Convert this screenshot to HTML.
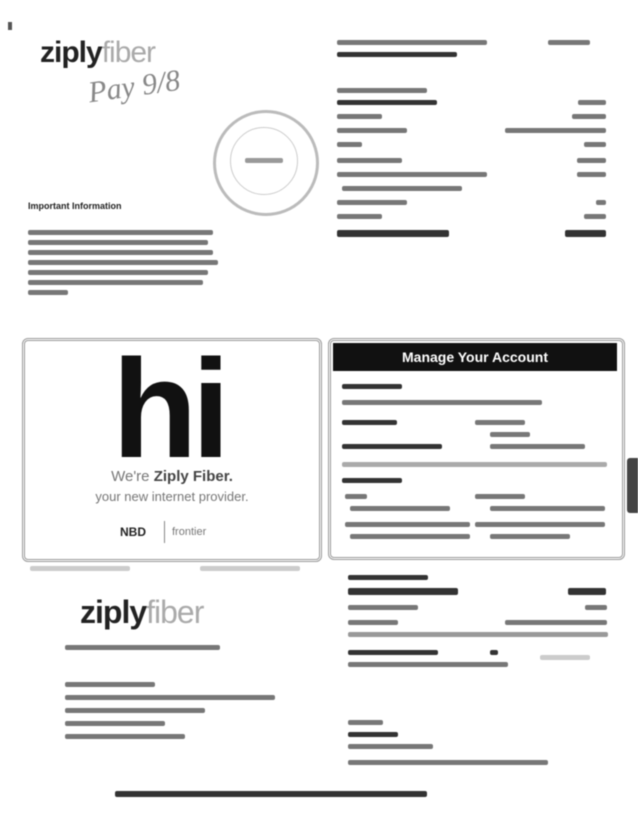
<!DOCTYPE html>
<html><head><meta charset="utf-8"><style>
body{margin:0;width:638px;height:825px;background:#fff;position:relative;overflow:hidden;font-family:"Liberation Sans",sans-serif;color:#222;filter:blur(0.6px)}
.a{position:absolute;white-space:nowrap}
.l{position:absolute;height:5px;background:#777;border-radius:2px}
.d{position:absolute;height:5px;background:#333;border-radius:2px}
</style></head><body>
<div class="a" style="left:8px;top:22px;width:4px;height:8px;background:#555"></div>
<div class="a" style="left:40px;top:36px;font-size:30px;font-weight:bold;letter-spacing:-1px">ziply<span style="font-weight:normal;color:#aaa">fiber</span></div>
<div class="a" style="left:88px;top:70px;font-size:30px;color:#888;font-family:'Liberation Serif',serif;font-style:italic;transform:rotate(-8deg)">Pay 9/8</div>
<div class="a" style="left:213px;top:110px;width:100px;height:100px;border:3px solid #bbb;border-radius:50%"></div>
<div class="a" style="left:230px;top:127px;width:66px;height:66px;border:1px solid #ccc;border-radius:50%"></div>
<div class="l" style="left:245px;top:158px;width:38px;background:#999"></div>
<div class="a" style="left:28px;top:201px;font-size:9px;font-weight:bold">Important Information</div>
<div class="l" style="left:28px;top:230px;width:185px"></div>
<div class="l" style="left:28px;top:240px;width:180px"></div>
<div class="l" style="left:28px;top:250px;width:185px"></div>
<div class="l" style="left:28px;top:260px;width:190px"></div>
<div class="l" style="left:28px;top:270px;width:180px"></div>
<div class="l" style="left:28px;top:280px;width:175px"></div>
<div class="l" style="left:28px;top:290px;width:40px"></div>
<div class="l" style="left:337px;top:40px;width:150px"></div>
<div class="l" style="left:548px;top:40px;width:42px"></div>
<div class="d" style="left:337px;top:52px;width:120px"></div>
<div class="l" style="left:337px;top:88px;width:90px"></div>
<div class="d" style="left:337px;top:100px;width:100px"></div><div class="l" style="left:578px;top:100px;width:28px"></div>
<div class="l" style="left:337px;top:114px;width:45px"></div><div class="l" style="left:572px;top:114px;width:34px"></div>
<div class="l" style="left:337px;top:128px;width:70px"></div><div class="l" style="left:505px;top:128px;width:101px"></div>
<div class="l" style="left:337px;top:142px;width:25px"></div><div class="l" style="left:584px;top:142px;width:22px"></div>
<div class="l" style="left:337px;top:158px;width:65px"></div><div class="l" style="left:577px;top:158px;width:29px"></div>
<div class="l" style="left:337px;top:172px;width:150px"></div><div class="l" style="left:577px;top:172px;width:29px"></div>
<div class="l" style="left:342px;top:186px;width:120px"></div>
<div class="l" style="left:337px;top:200px;width:70px"></div><div class="l" style="left:596px;top:200px;width:10px"></div>
<div class="l" style="left:337px;top:214px;width:45px"></div><div class="l" style="left:584px;top:214px;width:22px"></div>
<div class="d" style="left:337px;top:230px;width:112px;height:7px"></div><div class="d" style="left:565px;top:230px;width:41px;height:7px"></div>
<div class="a" style="left:22px;top:338px;width:294px;height:218px;border:3px double #999;border-radius:6px"></div>
<div class="a" style="left:112px;top:328px;font-size:140px;font-weight:bold;color:#111;letter-spacing:-6px">hi</div>
<div class="a" style="left:22px;top:468px;width:300px;text-align:center;font-size:15px;color:#777">We're <b style="color:#444">Ziply Fiber.</b></div>
<div class="a" style="left:22px;top:489px;width:300px;text-align:center;font-size:13px;color:#777">your new internet provider.</div>
<div class="a" style="left:120px;top:525px;font-size:12px;font-weight:bold">NBD</div>
<div class="a" style="left:164px;top:521px;width:1px;height:22px;background:#888"></div>
<div class="a" style="left:172px;top:526px;font-size:11px;color:#777">frontier</div>
<div class="a" style="left:328px;top:338px;width:291px;height:216px;border:3px double #999;border-radius:6px"></div>
<div class="a" style="left:333px;top:343px;width:284px;height:28px;background:#111;color:#fff;font-size:14px;font-weight:bold;text-align:center;line-height:28px">Manage Your Account</div>
<div class="d" style="left:342px;top:384px;width:60px"></div>
<div class="l" style="left:342px;top:400px;width:200px"></div>
<div class="d" style="left:342px;top:420px;width:55px"></div><div class="l" style="left:475px;top:420px;width:50px"></div>
<div class="l" style="left:490px;top:432px;width:40px"></div>
<div class="d" style="left:342px;top:444px;width:100px"></div><div class="l" style="left:490px;top:444px;width:95px"></div>
<div class="l" style="left:342px;top:462px;width:265px;background:#aaa"></div>
<div class="d" style="left:342px;top:478px;width:60px"></div>
<div class="l" style="left:345px;top:494px;width:22px"></div><div class="l" style="left:475px;top:494px;width:50px"></div>
<div class="l" style="left:350px;top:506px;width:100px"></div><div class="l" style="left:490px;top:506px;width:115px"></div>
<div class="l" style="left:345px;top:522px;width:125px"></div><div class="l" style="left:475px;top:522px;width:130px"></div>
<div class="l" style="left:350px;top:534px;width:120px"></div><div class="l" style="left:490px;top:534px;width:80px"></div>
<div class="a" style="left:627px;top:458px;width:11px;height:55px;background:#444;border-radius:3px 0 0 3px"></div>
<div class="l" style="left:30px;top:566px;width:100px;background:#ccc"></div>
<div class="l" style="left:200px;top:566px;width:100px;background:#ccc"></div>
<div class="a" style="left:80px;top:594px;font-size:32px;font-weight:bold;letter-spacing:-1px">ziply<span style="font-weight:normal;color:#aaa">fiber</span></div>
<div class="l" style="left:65px;top:645px;width:155px"></div>
<div class="l" style="left:65px;top:682px;width:90px"></div>
<div class="l" style="left:65px;top:695px;width:210px"></div>
<div class="l" style="left:65px;top:708px;width:140px"></div>
<div class="l" style="left:65px;top:721px;width:100px"></div>
<div class="l" style="left:65px;top:734px;width:120px"></div>
<div class="d" style="left:348px;top:575px;width:80px"></div>
<div class="d" style="left:348px;top:588px;width:110px;height:7px"></div><div class="d" style="left:568px;top:588px;width:38px;height:7px"></div>
<div class="l" style="left:348px;top:605px;width:70px"></div><div class="l" style="left:585px;top:605px;width:22px"></div>
<div class="l" style="left:348px;top:620px;width:50px"></div><div class="l" style="left:505px;top:620px;width:102px"></div>
<div class="l" style="left:348px;top:632px;width:260px;background:#999"></div>
<div class="d" style="left:348px;top:650px;width:90px"></div><div class="d" style="left:490px;top:650px;width:8px"></div>
<div class="l" style="left:348px;top:662px;width:160px"></div>
<div class="l" style="left:540px;top:655px;width:50px;background:#ccc"></div>
<div class="l" style="left:348px;top:720px;width:35px"></div>
<div class="d" style="left:348px;top:732px;width:50px"></div>
<div class="l" style="left:348px;top:744px;width:85px"></div>
<div class="l" style="left:348px;top:760px;width:200px"></div>
<div class="d" style="left:115px;top:791px;width:312px;height:6px"></div>
</body></html>
